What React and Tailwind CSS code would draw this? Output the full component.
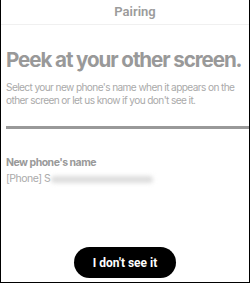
import React from 'react';

const App = () => {
  return (
    <div className="w-[250px] h-[283px] bg-white border-l border-r border-b border-black flex flex-col overflow-hidden font-['Inter',sans-serif]">
      <div className="h-[25px] border-b border-[#f0f0f0] flex items-center justify-center pl-[20px]">
        <span className="text-[13px] font-semibold text-[#9b9b9b] font-['Roboto',sans-serif]">Pairing</span>
      </div>
      <div className="px-[5px] flex flex-col flex-1">
        <h1 className="mt-[22px] text-[20.6px] leading-[26px] font-bold text-[#999] tracking-[-1.1px] whitespace-nowrap">
          Peek at your other screen.
        </h1>
        <p className="mt-[8px] text-[10.1px] leading-[13px] text-[#aaa] tracking-[-0.6px]">
          Select your new phone's name when it appears on the other screen or let us know if you don't see it.
        </p>
        <div className="mt-[19px] -mr-[5px] h-[3px] bg-[#999]" />
        <div className="mt-[27px] text-[10.5px] leading-[14px] font-bold text-[#999] tracking-[-0.5px]">
          New phone's name
        </div>
        <div className="mt-[2px] flex items-center text-[10.5px] leading-[14px] text-[#aaa] tracking-[-0.5px]">
          <span>[Phone] S</span>
          <span className="ml-[1px] w-[102px] h-[7px] rounded-full bg-[#ddd] blur-[2px]" />
        </div>
        <div className="flex-1" />
        <div className="flex justify-center pb-[4px]">
          <button className="w-[102px] h-[31px] rounded-full bg-black text-white text-[12px] font-bold font-['Roboto',sans-serif]">
            I don't see it
          </button>
        </div>
      </div>
    </div>
  );
};

export default App;
